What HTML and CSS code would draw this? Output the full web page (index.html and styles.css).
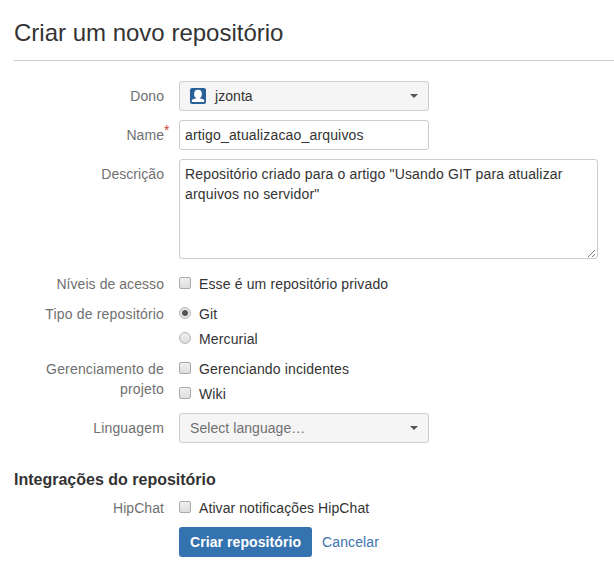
FILE: index.html
```html
<!DOCTYPE html>
<html lang="pt-BR">
<head>
<meta charset="utf-8">
<title>Criar um novo repositório</title>
<link rel="stylesheet" href="styles.css">
</head>
<body>
<main class="page">
  <h1 class="title">Criar um novo repositório</h1>
  <form class="form">
    <div class="row">
      <span class="label label-field">Dono</span>
      <div class="select">
        <svg class="avatar" viewBox="0 0 16 16" width="16" height="16"><rect width="16" height="16" rx="2" fill="#2a6098"/><ellipse cx="8" cy="6" rx="3.900" ry="4.300" fill="#fff"/><path d="M6.200 8.500h3.600v1.800l3.200 1c.8.300 1.200.8 1.200 1.500V14H1.800v-1.200c0-.7.400-1.200 1.200-1.500l3.200-1z" fill="#fff"/></svg>
        <span class="select-text">jzonta</span>
        <span class="caret"></span>
      </div>
    </div>
    <div class="row">
      <label class="label label-field" for="name">Name<span class="required">*</span></label>
      <input class="input" id="name" type="text" value="artigo_atualizacao_arquivos">
    </div>
    <div class="row">
      <label class="label label-field" for="description">Descrição</label>
      <div class="textarea-wrap">
        <textarea class="textarea" id="description" spellcheck="false">Repositório criado para o artigo "Usando GIT para atualizar arquivos no servidor"</textarea>
        <svg class="grip" viewBox="0 0 9 9" width="9" height="9"><path d="M1 8 8 1M5 8l3-3" fill="none" stroke="#777" stroke-width="1"/></svg>
      </div>
    </div>
    <div class="row row-options row-access">
      <span class="label">Níveis de acesso</span>
      <div class="options"><label class="option"><input class="check" type="checkbox">Esse é um repositório privado</label></div>
    </div>
    <div class="row row-options">
      <span class="label label-wide">Tipo de repositório</span>
      <div class="options">
        <label class="option"><input class="check radio" type="radio" name="scm" checked>Git</label>
        <label class="option"><input class="check radio" type="radio" name="scm">Mercurial</label>
      </div>
    </div>
    <div class="row">
      <span class="label label-wide">Gerenciamento de projeto</span>
      <div class="options">
        <label class="option"><input class="check" type="checkbox">Gerenciando incidentes</label>
        <label class="option"><input class="check" type="checkbox">Wiki</label>
      </div>
    </div>
    <div class="row">
      <span class="label label-field label-wide">Linguagem</span>
      <div class="select"><span class="select-text placeholder">Select language…</span><span class="caret"></span></div>
    </div>
    <h2 class="subtitle">Integrações do repositório</h2>
    <div class="row">
      <span class="label">HipChat</span>
      <div class="options"><label class="option option-narrow"><input class="check" type="checkbox">Ativar notificações HipChat</label></div>
    </div>
    <div class="actions">
      <button class="button" type="button">Criar repositório</button>
      <a class="cancel" href="#">Cancelar</a>
    </div>
  </form>
</main>
</body>
</html>
```
FILE: styles.css
```css
* { box-sizing: border-box; }

body {
  margin: 0;
  background: #fff;
  color: #333;
  font: 14px/20px "Liberation Sans", Arial, sans-serif;
}

.page { padding: 18px 0 0 14px; }

.title {
  margin: 0;
  height: 43px;
  border-bottom: 1px solid #ccc;
  font-size: 24px;
  font-weight: 400;
  line-height: 30px;
}

.form { padding-top: 20px; }

.row {
  display: grid;
  grid-template-columns: 150px 419px;
  column-gap: 15px;
  align-items: start;
  margin-bottom: 9px;
}

.row-options { margin-bottom: 10px; }
.row-access { margin-top: 15px; }

.label {
  position: relative;
  color: #707070;
  letter-spacing: 0.06px;
  text-align: right;
}

.label-wide { letter-spacing: 0.17px; }
.label-field { padding-top: 5px; }

.required {
  position: absolute;
  top: 0;
  left: 100%;
  color: #d04437;
}

.select,
.input {
  width: 250px;
  height: 30px;
  border: 1px solid #ccc;
  border-radius: 3px;
}

.select {
  display: flex;
  align-items: center;
  padding: 0 10px;
  background: #f5f5f5;
}

.avatar { margin-right: 9px; }

.select-text {
  flex: 1;
  letter-spacing: 0.06px;
}

.placeholder { color: #707070; }

.caret {
  border: 4px solid transparent;
  border-top-color: #555;
  border-bottom: 0;
}

.input,
.textarea {
  padding: 4px 5px;
  background: #fff;
  color: #333;
  font: inherit;
  letter-spacing: 0.16px;
  outline: 0;
}

.textarea-wrap {
  position: relative;
  height: 100px;
}

.textarea {
  display: block;
  width: 419px;
  height: 100px;
  border: 1px solid #ccc;
  border-radius: 3px;
  resize: none;
  overflow: hidden;
}

.grip {
  position: absolute;
  right: 2px;
  bottom: 1px;
}

.options {
  display: grid;
  row-gap: 5px;
}

.option {
  display: flex;
  align-items: center;
  letter-spacing: 0.14px;
}

.option-narrow { letter-spacing: 0.08px; }

.check {
  appearance: none;
  flex: none;
  width: 12px;
  height: 12px;
  margin: 0 8px 2px 0;
  border: 1px solid #aaa;
  border-radius: 2px;
  background: linear-gradient(#efefef, #dedede);
}

.radio {
  border-color: #b4b4b4;
  border-radius: 50%;
}

.radio:checked {
  background: radial-gradient(circle, #555 0 2.5px, #e6e6e6 3.5px);
}

.subtitle {
  margin: 27px 0 8px;
  font-size: 16px;
  font-weight: 700;
  line-height: 20px;
}

.actions {
  display: flex;
  align-items: center;
  gap: 10px;
  padding-left: 165px;
}

.button {
  width: 133px;
  height: 30px;
  padding: 0;
  border: 0;
  border-radius: 3px;
  background: #3572b0;
  color: #fff;
  font: inherit;
  font-weight: 700;
  letter-spacing: 0.08px;
}

.cancel {
  color: #3b73af;
  letter-spacing: 0.12px;
  text-decoration: none;
}
```
